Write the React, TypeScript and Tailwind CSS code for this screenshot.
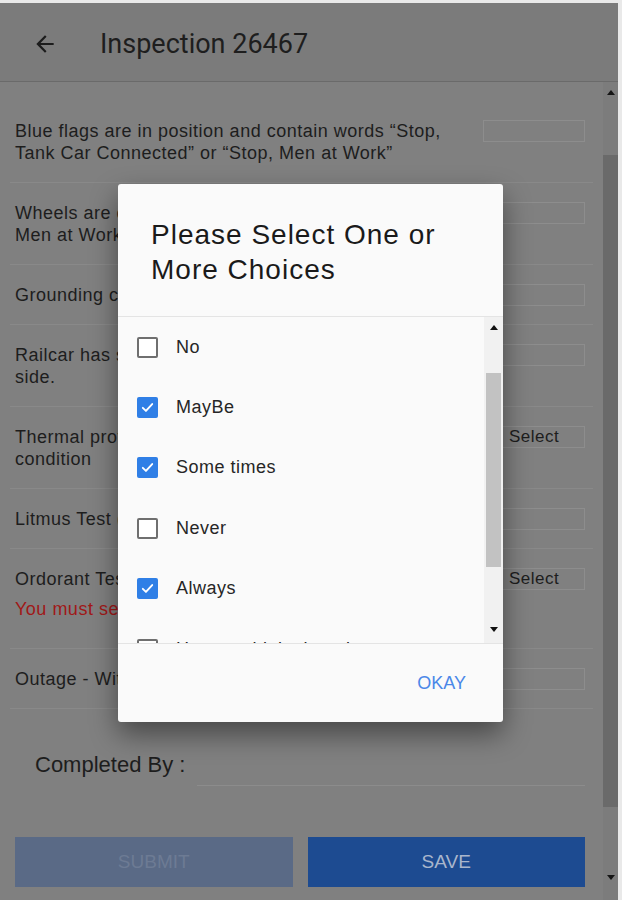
import React from "react";

type Row = { lines: string[]; select?: boolean; error?: string };

const rows: Row[] = [
  { lines: ["Blue flags are in position and contain words “Stop,", "Tank Car Connected” or “Stop, Men at Work”"] },
  { lines: ["Wheels are chocked and signs placed “Stop,", "Men at Work”"] },
  { lines: ["Grounding cable is connected"] },
  { lines: ["Railcar has safety placards on each", "side."] },
  { lines: ["Thermal protection is in good", "condition"], select: true },
  { lines: ["Litmus Test (pH)"] },
  { lines: ["Ordorant Test"], select: true, error: "You must select a value" },
  { lines: ["Outage - Within Limits"] },
];

const options = [
  { label: "No", checked: false },
  { label: "MayBe", checked: true },
  { label: "Some times", checked: true },
  { label: "Never", checked: false },
  { label: "Always", checked: true },
  { label: "Have to think about it", checked: false },
];

function TriUp({ color = "#111" }: { color?: string }) {
  return (
    <svg width="8" height="5" viewBox="0 0 8 5">
      <path d="M0 5 L4 0 L8 5 Z" fill={color} />
    </svg>
  );
}
function TriDown({ color = "#111" }: { color?: string }) {
  return (
    <svg width="8" height="5" viewBox="0 0 8 5">
      <path d="M0 0 L8 0 L4 5 Z" fill={color} />
    </svg>
  );
}

function Checkbox({ checked }: { checked: boolean }) {
  if (checked) {
    return (
      <div className="w-[21px] h-[21px] shrink-0 rounded-[2px] bg-[#2f7fe6] flex items-center justify-center">
        <svg width="15" height="15" viewBox="0 0 24 24">
          <path d="M4.5 12.5 L9.5 17.5 L19.5 6.5" fill="none" stroke="#ffffff" strokeWidth="3" strokeLinecap="round" strokeLinejoin="round" />
        </svg>
      </div>
    );
  }
  return <div className="w-[21px] h-[21px] shrink-0 rounded-[2px] border-2 border-[#6f6f6f] bg-white" />;
}

export default function App() {
  return (
    <div className="relative w-[622px] h-[900px] overflow-hidden bg-[#e9e9e9] font-['Liberation_Sans',Arial,sans-serif]">
      <div className="mt-[3px] mr-[4px] h-[897px] flex flex-col">
        {/* header */}
        <div className="h-[79px] shrink-0 bg-[#7b7b7b] border-b border-[#6a6a6a] flex items-center pt-[4px]">
          <div className="ml-[32px] w-[26px] h-[26px] flex items-center justify-center">
            <svg width="26" height="26" viewBox="0 0 24 24">
              <path d="M20 11H7.83l5.59-5.59L12 4l-8 8 8 8 1.41-1.41L7.83 13H20v-2z" fill="#1c1c1c" />
            </svg>
          </div>
          <div className="ml-[42px] font-['Roboto',sans-serif] text-[27px] text-[#1e1e1e] leading-none">Inspection 26467</div>
        </div>

        {/* body */}
        <div className="flex-1 min-h-0 flex bg-[#808080]">
          <div className="flex-1 min-w-0 pt-[19px]">
            {rows.map((r, i) => (
              <div key={i} className="mx-[10px] border-b border-[#898989] pt-[19px] pb-[18px] pl-[5px] pr-[8px] flex items-start">
                <div className="w-[455px] text-[18px] tracking-[0.5px] leading-[22px] text-[#1d1d1d]">
                  {r.lines.map((l, j) => (
                    <div key={j} className="whitespace-nowrap">{l}</div>
                  ))}
                  {r.error && (
                    <div className="mt-[8px] mb-[10px] text-[#a01818] whitespace-nowrap">{r.error}</div>
                  )}
                </div>
                <div className="ml-auto w-[102px] h-[22px] shrink-0 border border-[#8d8d8d] flex items-center justify-center text-[17px] tracking-[0.5px] text-[#1d1d1d]">
                  {r.select ? "Select" : ""}
                </div>
              </div>
            ))}
            {/* completed by */}
            <div className="mt-[42px] pl-[35px] pr-[18px] flex items-start">
              <div className="text-[22px] leading-[28px] text-[#1d1d1d] whitespace-nowrap">Completed By :</div>
              <div className="ml-[12px] flex-1 h-[35px] border-b border-[#8c8c8c]" />
            </div>
            {/* buttons */}
            <div className="mt-[51px] pl-[15px] pr-[18px] flex gap-[15px]">
              <div className="flex-1 h-[50px] bg-[#5a6a86] flex items-center justify-center text-[19px] text-[#6d7b94]">SUBMIT</div>
              <div className="flex-1 h-[50px] bg-[#1d4b91] flex items-center justify-center text-[19px] text-[#a9b6cc]">SAVE</div>
            </div>
          </div>
          {/* page scrollbar */}
          <div className="w-[15px] shrink-0 bg-[#7c7c7c] flex flex-col items-stretch">
            <div className="h-[20px] flex items-center justify-center"><TriUp color="#151515" /></div>
            <div className="h-[53px]" />
            <div className="h-[652px] bg-[#6a6a6a]" />
            <div className="flex-1" />
            <div className="h-[30px] flex items-start justify-center pt-[5px]"><TriDown color="#151515" /></div>
          </div>
        </div>
      </div>

      {/* dialog */}
      <div className="absolute left-[118px] top-[184px] w-[385px] h-[538px] bg-[#fafafa] rounded-[3px] shadow-[0_12px_28px_rgba(0,0,0,0.45)] flex flex-col overflow-hidden">
        <div className="h-[132px] shrink-0 pl-[33px] pt-[33px] text-[28px] tracking-[1px] leading-[35px] text-[#1a1a1a]">
          <div className="whitespace-nowrap">Please Select One or</div>
          <div className="whitespace-nowrap">More Choices</div>
        </div>
        <div className="h-[328px] shrink-0 border-t border-b border-[#e4e4e4] flex">
          <div className="flex-1 overflow-hidden">
            {options.map((o, i) => (
              <div key={i} className="h-[60.4px] shrink-0 flex items-center pl-[19px]">
                <Checkbox checked={o.checked} />
                <span className="ml-[18px] text-[18px] tracking-[0.5px] text-[#262626] whitespace-nowrap">{o.label}</span>
              </div>
            ))}
          </div>
          <div className="w-[19px] shrink-0 bg-[#f1f1f1] flex flex-col">
            <div className="h-[20px] flex items-center justify-center"><TriUp /></div>
            <div className="h-[36px]" />
            <div className="h-[194px] mx-[2px] bg-[#c2c2c2]" />
            <div className="flex-1" />
            <div className="h-[20px] flex items-start justify-center pt-[4px]"><TriDown /></div>
          </div>
        </div>
        <div className="flex-1 flex items-center justify-end pr-[37px]">
          <span className="text-[18px] text-[#4a87e8]">OKAY</span>
        </div>
      </div>
    </div>
  );
}
